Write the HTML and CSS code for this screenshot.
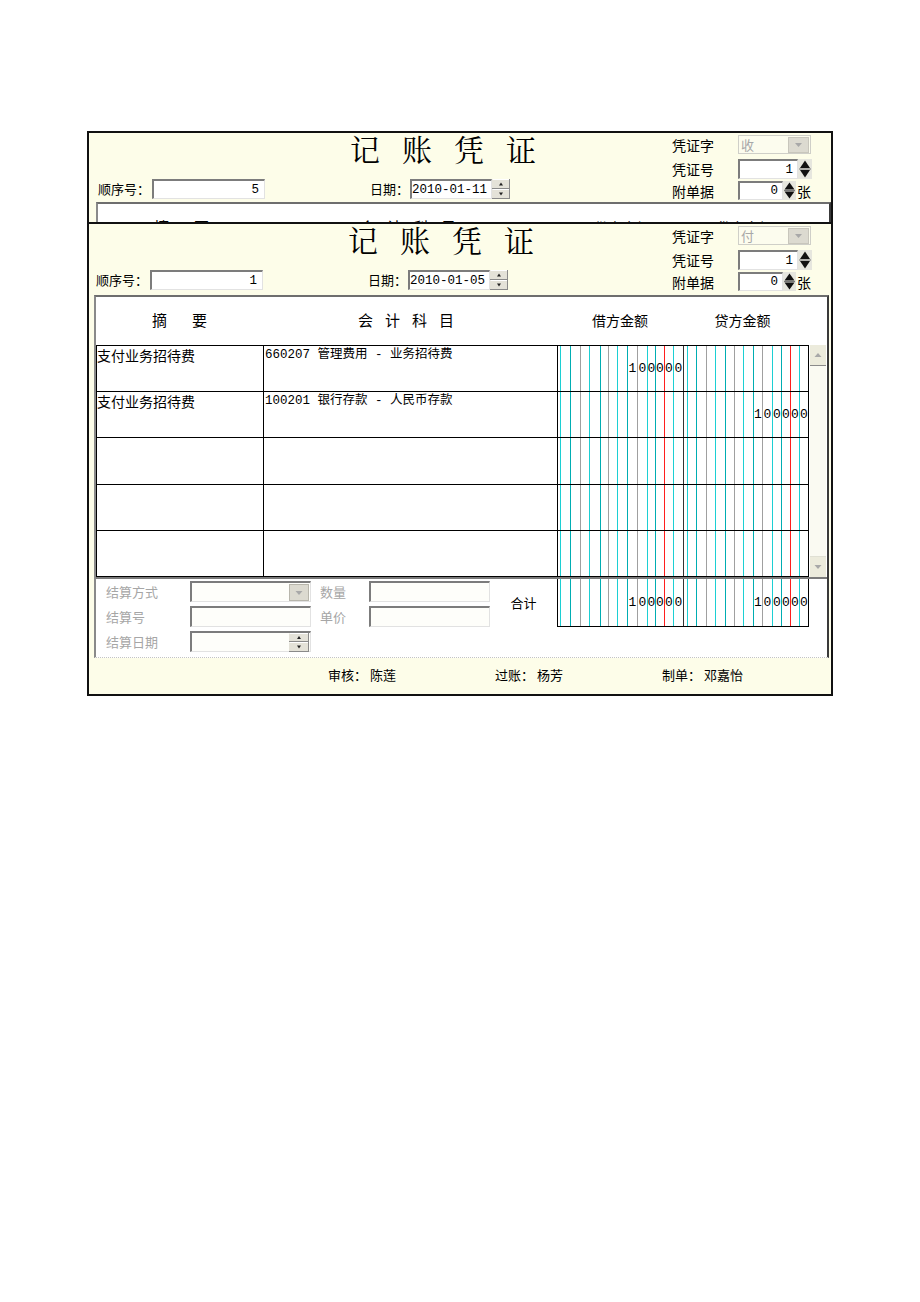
FILE: index.html
```html
<!DOCTYPE html>
<html lang="zh-CN">
<head>
<meta charset="utf-8">
<title>记账凭证</title>
<link rel="stylesheet" href="styles.css">
</head>
<body>
<div class="page">

  <section class="voucher clip">
    <div class="inner">
      <div class="head">
        <div class="head-left">
          <div class="title">记账凭证</div>
          <div class="line">
            <span class="lbl">顺序号：</span>
            <span class="in seq mono">5</span>
            <span class="lbl date-lbl">日期：</span>
            <span class="in date mono">2010-01-11</span>
            <svg class="spin" width="18" height="20" viewBox="0 0 18 20"><rect width="18" height="20" fill="#e4e2d8"/><path d="M0.5 0.5H17.5M0.5 10.5H17.5" stroke="#fff"/><path d="M0 9.5H18M0 19.5H18M17.5 0V20" stroke="#8a8a8a"/><path d="M9 3.5L11 6.5H7Z" fill="#222"/><path d="M7 13.5H11L9 16.5Z" fill="#222"/></svg>
          </div>
        </div>
        <div class="head-right">
          <div class="r r1"><span class="rl">凭证字</span><span class="combo"><span class="cv">收</span><svg class="dd" width="21" height="16" viewBox="0 0 21 16"><rect x="0.5" y="0.5" width="20" height="15" fill="#dcdad0" stroke="#c8c6bc"/><path d="M7 6h7l-3.5 4z" fill="#a8a8a8"/></svg></span></div>
          <div class="r r2"><span class="rl">凭证号</span><span class="in num mono">1</span><svg class="bspin" width="14" height="20" viewBox="0 0 14 20"><rect width="14" height="20" fill="#e6e6de"/><path d="M7 1.5L12 9H2Z" fill="#111"/><path d="M2 11H12L7 18.5Z" fill="#111"/><path d="M1 10H13" stroke="#777"/></svg></div>
          <div class="r r3"><span class="rl">附单据</span><span class="in att mono">0</span><svg class="bspin sm" width="13" height="19" viewBox="0 0 13 19"><rect width="13" height="19" fill="#e6e6de"/><path d="M6.5 1.5L11.5 8.5H1.5Z" fill="#111"/><path d="M1.5 10.5H11.5L6.5 17.5Z" fill="#111"/><path d="M1 9.5H12" stroke="#777"/></svg><span class="zhang">张</span></div>
        </div>
      </div>
      <div class="frame">
        <div class="thead">
          <span class="h1">摘要</span>
          <span class="h2">会计科目</span>
          <span class="h3">借方金额</span>
          <span class="h4">贷方金额</span>
        </div>
      </div>
    </div>
  </section>

  <section class="voucher">
    <div class="head">
      <div class="head-left">
        <div class="title">记账凭证</div>
        <div class="line">
          <span class="lbl">顺序号：</span>
          <span class="in seq mono">1</span>
          <span class="lbl date-lbl">日期：</span>
          <span class="in date mono">2010-01-05</span>
          <svg class="spin" width="18" height="20" viewBox="0 0 18 20"><rect width="18" height="20" fill="#e4e2d8"/><path d="M0.5 0.5H17.5M0.5 10.5H17.5" stroke="#fff"/><path d="M0 9.5H18M0 19.5H18M17.5 0V20" stroke="#8a8a8a"/><path d="M9 3.5L11 6.5H7Z" fill="#222"/><path d="M7 13.5H11L9 16.5Z" fill="#222"/></svg>
        </div>
      </div>
      <div class="head-right">
        <div class="r r1"><span class="rl">凭证字</span><span class="combo"><span class="cv">付</span><svg class="dd" width="21" height="16" viewBox="0 0 21 16"><rect x="0.5" y="0.5" width="20" height="15" fill="#dcdad0" stroke="#c8c6bc"/><path d="M7 6h7l-3.5 4z" fill="#a8a8a8"/></svg></span></div>
        <div class="r r2"><span class="rl">凭证号</span><span class="in num mono">1</span><svg class="bspin" width="14" height="20" viewBox="0 0 14 20"><rect width="14" height="20" fill="#e6e6de"/><path d="M7 1.5L12 9H2Z" fill="#111"/><path d="M2 11H12L7 18.5Z" fill="#111"/><path d="M1 10H13" stroke="#777"/></svg></div>
        <div class="r r3"><span class="rl">附单据</span><span class="in att mono">0</span><svg class="bspin sm" width="13" height="19" viewBox="0 0 13 19"><rect width="13" height="19" fill="#e6e6de"/><path d="M6.5 1.5L11.5 8.5H1.5Z" fill="#111"/><path d="M1.5 10.5H11.5L6.5 17.5Z" fill="#111"/><path d="M1 9.5H12" stroke="#777"/></svg><span class="zhang">张</span></div>
      </div>
    </div>

    <div class="frame">
      <div class="thead">
        <span class="h1">摘要</span>
        <span class="h2">会计科目</span>
        <span class="h3">借方金额</span>
        <span class="h4">贷方金额</span>
      </div>

      <div class="tbody">
        <div class="grid">
          <div class="row">
            <div class="c1">支付业务招待费</div>
            <div class="c2">660207 管理费用 - 业务招待费</div>
            <div class="led deb"><b></b><i></i><i></i><i></i><i></i><i></i><i></i><i></i><i>1</i><i>0</i><i>0</i><i>0</i><i>0</i><i>0</i></div>
            <div class="led cre"><b></b><i></i><i></i><i></i><i></i><i></i><i></i><i></i><i></i><i></i><i></i><i></i><i></i><i></i></div>
          </div>
          <div class="row">
            <div class="c1">支付业务招待费</div>
            <div class="c2">100201 银行存款 - 人民币存款</div>
            <div class="led deb"><b></b><i></i><i></i><i></i><i></i><i></i><i></i><i></i><i></i><i></i><i></i><i></i><i></i><i></i></div>
            <div class="led cre"><b></b><i></i><i></i><i></i><i></i><i></i><i></i><i></i><i>1</i><i>0</i><i>0</i><i>0</i><i>0</i><i>0</i></div>
          </div>
          <div class="row">
            <div class="c1"></div>
            <div class="c2"></div>
            <div class="led deb"><b></b><i></i><i></i><i></i><i></i><i></i><i></i><i></i><i></i><i></i><i></i><i></i><i></i><i></i></div>
            <div class="led cre"><b></b><i></i><i></i><i></i><i></i><i></i><i></i><i></i><i></i><i></i><i></i><i></i><i></i><i></i></div>
          </div>
          <div class="row">
            <div class="c1"></div>
            <div class="c2"></div>
            <div class="led deb"><b></b><i></i><i></i><i></i><i></i><i></i><i></i><i></i><i></i><i></i><i></i><i></i><i></i><i></i></div>
            <div class="led cre"><b></b><i></i><i></i><i></i><i></i><i></i><i></i><i></i><i></i><i></i><i></i><i></i><i></i><i></i></div>
          </div>
          <div class="row">
            <div class="c1"></div>
            <div class="c2"></div>
            <div class="led deb"><b></b><i></i><i></i><i></i><i></i><i></i><i></i><i></i><i></i><i></i><i></i><i></i><i></i><i></i></div>
            <div class="led cre"><b></b><i></i><i></i><i></i><i></i><i></i><i></i><i></i><i></i><i></i><i></i><i></i><i></i><i></i></div>
          </div>
        </div>
        <div class="sb">
          <div class="sb-btn sb-up"><svg width="16" height="20" viewBox="0 0 16 20"><path d="M4.5 12h7L8 8z" fill="#a8a8a8"/></svg></div>
          <div class="sb-track"></div>
          <div class="sb-btn sb-dn"><svg width="16" height="20" viewBox="0 0 16 20"><path d="M4.5 8h7L8 12z" fill="#a8a8a8"/></svg></div>
        </div>
      </div>

      <div class="tfoot">
        <div class="fields">
          <span class="fl">结算方式</span>
          <span class="in fin combo2"><span></span><svg class="dd" width="20" height="17" viewBox="0 0 20 17"><rect x="0.5" y="0.5" width="19" height="16" fill="#dcdad0" stroke="#b8b6ac"/><path d="M6.5 7h7L10 11z" fill="#a8a8a8"/></svg></span>
          <span class="fl">数量</span>
          <span class="in fin"></span>
          <span class="fl">结算号</span>
          <span class="in fin"></span>
          <span class="fl">单价</span>
          <span class="in fin"></span>
          <span class="fl">结算日期</span>
          <span class="in fin combo2"><span></span><svg class="spin" width="20" height="19" viewBox="0 0 20 19"><rect width="20" height="19" fill="#e4e2d8"/><path d="M0.5 0.5H19.5M0.5 9.5H19.5" stroke="#fff"/><path d="M0 8.5H20M0 18.5H20M19.5 0V19" stroke="#8a8a8a"/><path d="M10 3L12 6H8Z" fill="#222"/><path d="M8 12.5H12L10 15.5Z" fill="#222"/></svg></span>
        </div>
        <div class="sum-lbl">合计</div>
        <div class="sum">
          <div class="led deb"><b></b><i></i><i></i><i></i><i></i><i></i><i></i><i></i><i>1</i><i>0</i><i>0</i><i>0</i><i>0</i><i>0</i></div>
          <div class="led cre"><b></b><i></i><i></i><i></i><i></i><i></i><i></i><i></i><i>1</i><i>0</i><i>0</i><i>0</i><i>0</i><i>0</i></div>
        </div>
      </div>
    </div>

    <div class="foot">
      <span>审核： 陈莲</span>
      <span>过账： 杨芳</span>
      <span>制单： 邓嘉怡</span>
    </div>
  </section>

</div>
</body>
</html>
```

FILE: styles.css
```css
* { box-sizing: border-box; }

body {
  margin: 0;
  background: #ffffff;
  color: #000;
  font-family: "Noto Sans CJK SC", "Liberation Sans", sans-serif;
  font-size: 13px;
  line-height: 16px;
}

.page {
  padding: 131px 0 0 87px;
}

.voucher {
  width: 746px;
  border: 2px solid #111;
  background: #fdfde9;
}

.voucher.clip {
  height: 91px;
  overflow: hidden;
  border-bottom: 0;
}

.clip .inner {
  margin-left: 2px;
}

.clip .head {
  height: 69px;
}

.mono {
  font-family: "Liberation Mono", "Noto Sans CJK SC", monospace;
}

/* ---------- header ---------- */
.head {
  display: flex;
  height: 71px;
}

.head-left {
  flex: 1;
  padding-left: 7px;
}

.title {
  height: 36px;
  padding-left: 252px;
  font-family: "AR PL UKai CN", "Noto Serif CJK SC", "Noto Sans CJK SC", serif;
  font-size: 30px;
  line-height: 30px;
  letter-spacing: 22px;
  white-space: nowrap;
}

.line {
  display: flex;
  align-items: center;
  height: 20px;
  margin-top: 10px;
}

.lbl {
  width: 54px;
  white-space: nowrap;
}

.date-lbl {
  width: 40px;
  margin-left: 105px;
}

.in {
  display: flex;
  align-items: center;
  height: 20px;
  background: #ffffff;
  border-style: solid;
  border-width: 2px 1px 1px 2px;
  border-color: #7c7c7c #e2e2e2 #e2e2e2 #7c7c7c;
  font-size: 12.5px;
  white-space: nowrap;
}

.seq {
  width: 113px;
  justify-content: flex-end;
  padding-right: 5px;
}

.date {
  width: 82px;
  padding-left: 0;
}

.spin {
  display: block;
  flex: none;
}

.head-right {
  width: 159px;
  padding-right: 19px;
}

.r {
  display: flex;
  align-items: center;
}

.r1 { height: 19px; margin-top: 2px; }
.r2 { height: 20px; margin-top: 5px; }
.r3 { height: 19px; margin-top: 2px; }

.rl {
  width: 66px;
  font-size: 14px;
  white-space: nowrap;
}

.combo {
  display: flex;
  align-items: center;
  justify-content: space-between;
  width: 73px;
  height: 19px;
  border: 1px solid #cfcfc8;
  padding: 0 1px 0 2px;
  background: #fcfcee;
}

.cv {
  color: #a8a8a8;
  font-size: 13px;
}

.dd { display: block; flex: none; }

.num {
  width: 60px;
  justify-content: flex-end;
  padding-right: 4px;
}

.att {
  width: 45px;
  height: 19px;
  justify-content: flex-end;
  padding-right: 4px;
}

.bspin { display: block; flex: none; }

.zhang {
  margin-left: 1px;
  font-size: 14px;
}

/* ---------- frame ---------- */
.frame {
  margin-left: 5px;
  width: 735px;
  height: 363px;
  background: #ffffff;
  border-top: 2px solid #6e6e6e;
  border-left: 2px solid #8a8a8a;
  border-right: 2px solid #3a3a3a;
  border-bottom: 1px dotted #c4c4c4;
  display: flex;
  flex-direction: column;
}

.thead {
  display: flex;
  align-items: center;
  height: 48px;
  padding-bottom: 3px;
  font-size: 14px;
  white-space: nowrap;
}

.thead span { text-align: center; }

.h1 { width: 167px; letter-spacing: 25px; padding-left: 25px; font-size: 15px; }
.h2 { width: 294px; letter-spacing: 12px; padding-left: 4px; font-size: 15px; }
.h3 { width: 126px; }
.h4 { width: 125px; padding-right: 6px; }

.tbody {
  display: flex;
  height: 232px;
}

.grid {
  width: 713px;
  border-top: 1px solid #000;
}

.row {
  display: flex;
  height: 46.2px;
  border-left: 1px solid #000;
  border-bottom: 1px solid #000;
}

.c1 {
  width: 167px;
  border-right: 1px solid #000;
  padding: 1px 0 0 0;
  font-size: 14px;
  white-space: nowrap;
}

.c2 {
  width: 294px;
  border-right: 1px solid #000;
  padding: 1px 0 0 1px;
  font-family: "Liberation Mono", "Noto Sans CJK SC", monospace;
  font-size: 12.5px;
  white-space: nowrap;
}

/* ledger (amount) columns */
.led {
  display: grid;
  height: 100%;
}

.deb {
  width: 126px;
  grid-template-columns: 2px 10px 10px 9px 11px 8px 9px 10px 10px 10px 8px 9px 9px 10px;
  border-right: 1px solid #333;
}

.cre {
  width: 125px;
  grid-template-columns: 3px 9px 10px 9px 10px 9px 9px 10px 9px 10px 9px 9px 9px 9px;
  border-right: 1px solid #000;
}

.led i {
  display: flex;
  align-items: center;
  justify-content: center;
  border-left: 1px solid #1ccfd3;
  font-style: normal;
  font-family: "Liberation Mono", monospace;
  font-size: 13px;
  padding-top: 1px;
}

.led i:nth-child(3n) { border-left-color: #00adb2; }
.led i:nth-child(3n+1) { border-left-color: #a0a0a0; }
.led i:nth-child(13) { border-left-color: #ff1e1e; }

/* scrollbar */
.sb {
  width: 16px;
  margin-left: 1px;
  display: flex;
  flex-direction: column;
  background: #fafaf2;
}

.sb-btn {
  height: 21px;
  background: #ecebdc;
  display: flex;
  align-items: center;
  justify-content: center;
}

.sb-btn svg { display: block; }

.sb-up { border-bottom: 1px solid #8a8a8a; }
.sb-dn { border-top: 1px solid #e0e0d4; }

.sb-track { flex: 1; }

/* bottom section */
.tfoot {
  display: flex;
  height: 80px;
  border-top: 2px solid #7a7a7a;
}

.fields {
  width: 394px;
  display: grid;
  grid-template-columns: 84px 130px 49px 121px;
  grid-template-rows: 21px 21px 21px;
  row-gap: 4px;
  align-content: start;
  padding: 2px 0 0 10px;
}

.fl {
  display: flex;
  align-items: center;
  color: #a6a6a6;
  font-size: 13px;
  white-space: nowrap;
}

.fin {
  width: 121px;
  height: 21px;
  background: #fefefa;
}

.combo2 {
  justify-content: space-between;
  padding-right: 1px;
}

.sum-lbl {
  width: 67px;
  height: 48px;
  display: flex;
  align-items: center;
  justify-content: center;
  font-size: 13px;
}

.sum {
  display: flex;
  height: 48px;
  border-left: 1px solid #000;
  border-bottom: 1px solid #000;
}

/* footer */
.foot {
  display: flex;
  align-items: center;
  height: 36px;
  padding-left: 239px;
  padding-bottom: 2px;
  font-size: 13px;
  white-space: nowrap;
}

.foot span { width: 167px; }
```
